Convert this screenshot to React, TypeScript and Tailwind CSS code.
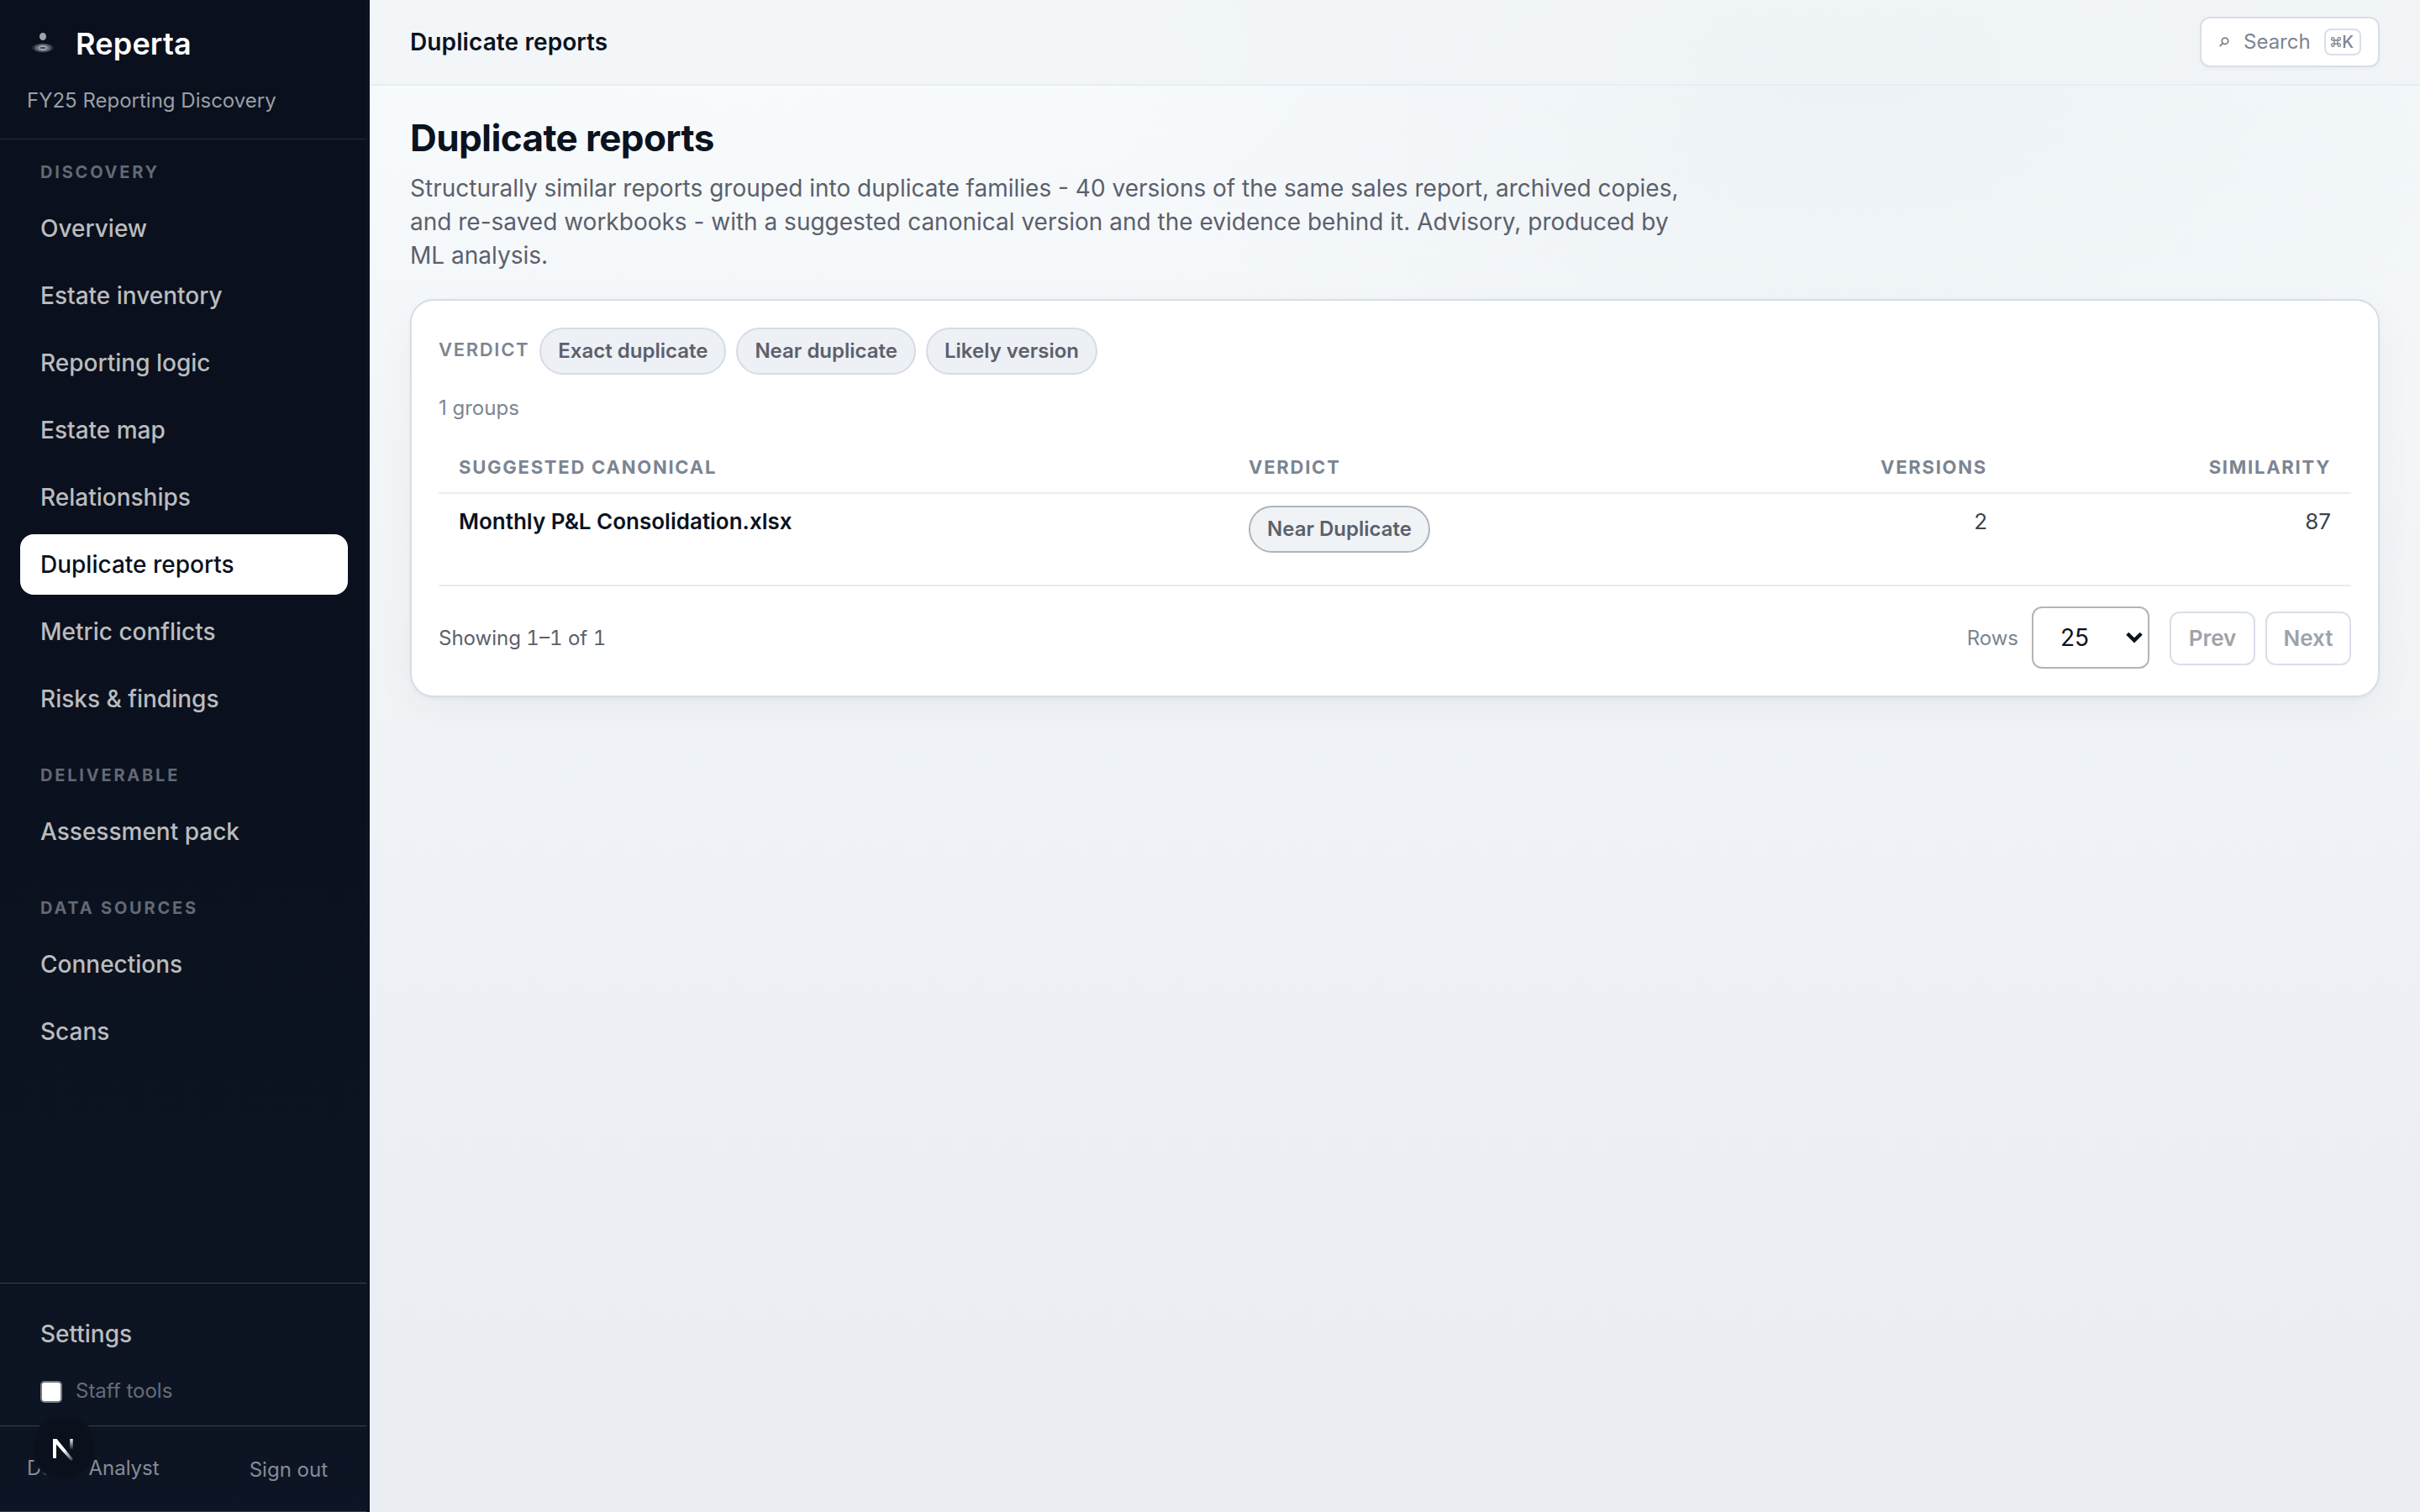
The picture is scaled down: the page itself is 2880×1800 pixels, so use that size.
import type { ReactNode } from "react";

const discovery = [
  "Overview",
  "Estate inventory",
  "Reporting logic",
  "Estate map",
  "Relationships",
  "Duplicate reports",
  "Metric conflicts",
  "Risks & findings",
];

function NavLabel({ children, first }: { children: ReactNode; first?: boolean }) {
  return (
    <div
      className={`px-6 text-[20px] font-bold uppercase leading-6 tracking-[2.8px] text-[#636975] ${
        first ? "pt-[27px]" : "pt-[43px]"
      } pb-[19px]`}
    >
      {children}
    </div>
  );
}

function NavItem({ label, active }: { label: string; active?: boolean }) {
  return (
    <a
      className={`flex h-[72px] shrink-0 items-center rounded-2xl px-6 text-[28px] font-medium ${
        active ? "bg-white text-[#0a101d]" : "text-[#bbbcbe]"
      }`}
    >
      {label}
    </a>
  );
}

function Logo() {
  return (
    <svg className="h-9 w-9" viewBox="0 0 36 36" fill="none">
      <ellipse cx="19" cy="23" rx="12.5" ry="5.5" fill="#2b323f" />
      <ellipse cx="19" cy="23" rx="9.5" ry="4.6" fill="#636a77" />
      <ellipse cx="19" cy="23" rx="5.5" ry="3" fill="#a3a7ae" />
      <ellipse cx="19" cy="23" rx="3.5" ry="1" fill="#3a414e" />
      <ellipse cx="19" cy="9.5" rx="4" ry="4.5" fill="#a0a3aa" />
    </svg>
  );
}

function Sidebar() {
  return (
    <aside className="flex h-full w-[440px] shrink-0 flex-col border-r-4 border-[#0c1322] bg-linear-to-b from-[#0a101d] from-40% to-[#0d1524]">
      <div className="flex h-[166px] shrink-0 flex-col border-b border-[#252b37] px-8">
        <div className="flex h-[104px] items-center gap-[22px]">
          <Logo />
          <span className="text-[36px] font-semibold tracking-[0.2px] text-white">Reperta</span>
        </div>
        <div className="pt-px text-[24px] leading-[30px] text-[#9a9fa7]">FY25 Reporting Discovery</div>
      </div>
      <nav className="flex grow flex-col px-6 pr-[22px]">
        <NavLabel first>Discovery</NavLabel>
        <div className="flex flex-col gap-2">
          {discovery.map((l) => (
            <NavItem key={l} label={l} active={l === "Duplicate reports"} />
          ))}
        </div>
        <NavLabel>Deliverable</NavLabel>
        <NavItem label="Assessment pack" />
        <NavLabel>Data sources</NavLabel>
        <div className="flex flex-col gap-2">
          <NavItem label="Connections" />
          <NavItem label="Scans" />
        </div>
      </nav>
      <div className="flex h-[170px] shrink-0 flex-col border-t border-[#3a414c] px-6 pt-6">
        <NavItem label="Settings" />
        <label className="flex h-[66px] items-center gap-4 px-6 text-[24px] text-[#666c78]">
          <span className="h-[26px] w-[26px] rounded-[5px] border-2 border-[#767b84] bg-white" />
          <span className="pb-0.5">Staff tools</span>
        </label>
      </div>
      <div className="relative flex h-[103px] shrink-0 items-center justify-between border-y border-[#3a414c] pl-8 pr-[46px] pb-0.5 text-[24px] text-[#858c97]">
        <span>Demo Analyst</span>
        <span className="pt-1">Sign out</span>
        <div className="absolute left-10 top-[-11px] h-[72px] w-[72px] rounded-full bg-[#0a101c] shadow-[0_0_0_3px_#0c1321]">
          <svg className="h-full w-full" viewBox="-1 -1 72 72" fill="none">
            <defs>
              <linearGradient id="diag" gradientUnits="userSpaceOnUse" x1="36" y1="38" x2="46" y2="50">
                <stop stopColor="#fff" />
                <stop offset="1" stopColor="#fff" stopOpacity="0.2" />
              </linearGradient>
              <linearGradient id="stem" gradientUnits="userSpaceOnUse" x1="44" y1="24" x2="44" y2="37">
                <stop stopColor="#fff" />
                <stop offset="1" stopColor="#fff" stopOpacity="0.1" />
              </linearGradient>
            </defs>
            <path d="M22 25h4v23h-4z" fill="#fff" />
            <path d="M22 25h4.6L46 49l-2.6 2L22 27z" fill="url(#diag)" />
            <path d="M42.2 25h3.6v12.5h-3.6z" fill="url(#stem)" />
          </svg>
        </div>
      </div>
    </aside>
  );
}

function Pill({ children, strong }: { children: ReactNode; strong?: boolean }) {
  return (
    <span
      className={`inline-flex h-14 items-center rounded-full border-2 px-5 text-[24px] font-semibold text-[#5b606c] ${
        strong ? "border-[#b0b4ba] bg-[#eff3f6]" : "border-[#d5dce6] bg-[#edf0f5]"
      }`}
    >
      {children}
    </span>
  );
}

function PageButton({ children }: { children: ReactNode }) {
  return (
    <button className="h-16 w-[102px] rounded-xl border-2 border-[#d9dfe9] bg-white pb-0.5 text-[26px] font-semibold text-[#9ea2a9]">
      {children}
    </button>
  );
}

const th =
  "h-[58px] border-b-2 border-[#e9ecf2] px-6 pt-0 pb-1 align-middle text-[22px] font-bold uppercase tracking-[1.76px] text-[#7b8592]";
const td = "h-[110px] border-b-2 border-[#e9ecf2] px-6 pt-3.5 align-top text-[26px] leading-[38px]";

export default function App() {
  return (
    <div className="flex h-[1800px] w-[2880px] overflow-hidden font-['Inter',sans-serif] text-[#0b1220]">
      <Sidebar />
      <div className="flex grow flex-col bg-[radial-gradient(ellipse_1300px_500px_at_18%_3%,rgba(255,255,255,0.4),transparent),radial-gradient(ellipse_900px_420px_at_72%_4%,rgba(226,232,238,0.4),transparent),linear-gradient(180deg,#f5f9fb_0%,#f0f4f7_47%,#edf0f5_66%,#eaedf2_90%,#eaedf2_100%)]">
        <header className="flex h-[102px] shrink-0 items-center justify-between border-b-2 border-[#e8edf1] bg-[#eff3f7]/70 px-12">
          <span className="text-[28px] font-semibold tracking-[0.1px]">Duplicate reports</span>
          <div className="flex h-[60px] w-[214px] items-center rounded-xl border-2 border-[#d9dfe9] bg-white pl-[21px] text-[24px] text-[#7b8592] shadow-[0_2px_4px_rgba(15,23,42,0.03)]">
            <svg className="h-3 w-3" viewBox="0 0 12 12" fill="none" stroke="#7b8592" strokeWidth="1.8">
              <circle cx="7" cy="4.8" r="3.7" />
              <path d="M4.4 7.4L0.8 11" />
            </svg>
            <span className="ml-[17px]">Search</span>
            <span className="ml-4 flex h-8 w-11 items-center justify-center rounded-lg border-2 border-[#d9dfe9] text-[20px] font-medium">
              <svg className="mr-px h-3 w-3" viewBox="0 0 12 12" fill="none" stroke="#7b8592" strokeWidth="1.3">
                <path d="M4 4H2.3A1.7 1.7 0 1 1 4 2.3v7.4A1.7 1.7 0 1 1 2.3 8h7.4A1.7 1.7 0 1 1 8 9.7V2.3A1.7 1.7 0 1 1 9.7 4H4" />
              </svg>
              K
            </span>
          </div>
        </header>
        <main className="flex flex-col px-12 pt-[34px]">
          <h1 className="text-[44px] font-bold leading-[56px] tracking-[-0.6px]">Duplicate reports</h1>
          <p className="mt-3 w-[1520px] text-[28px] leading-10 text-[#5b606c]">
            Structurally similar reports grouped into duplicate families - 40 versions of the same sales report, archived
            copies, and re-saved workbooks - with a suggested canonical version and the evidence behind it. Advisory,
            produced by ML analysis.
          </p>
          <section className="mt-8 flex h-[474px] flex-col rounded-[28px] border-2 border-[#d6dde7] bg-white px-8 pt-8 shadow-[0_2px_4px_rgba(15,23,42,0.04),0_16px_48px_rgba(15,23,42,0.04)]">
            <div className="flex items-center gap-3">
              <span className="pb-1 text-[22px] font-semibold tracking-[1.7px] text-[#7b8592]">VERDICT</span>
              <Pill>Exact duplicate</Pill>
              <Pill>Near duplicate</Pill>
              <Pill>Likely version</Pill>
            </div>
            <div className="mt-[22px] text-[24px] leading-9 text-[#7b8592]">1 groups</div>
            <table className="mt-[26px] w-full table-fixed border-separate border-spacing-0">
              <colgroup>
                <col className="w-[940px]" />
                <col className="w-[620px]" />
                <col className="w-[307px]" />
                <col />
              </colgroup>
              <thead>
                <tr>
                  <th className={`${th} text-left`}>Suggested canonical</th>
                  <th className={`${th} text-left`}>Verdict</th>
                  <th className={`${th} text-right`}>Versions</th>
                  <th className={`${th} text-right`}>Similarity</th>
                </tr>
              </thead>
              <tbody>
                <tr>
                  <td className={`${td} font-semibold`}>Monthly P&amp;L Consolidation.xlsx</td>
                  <td className={td}>
                    <div className="flex">
                      <Pill strong>Near Duplicate</Pill>
                    </div>
                  </td>
                  <td className={`${td} text-right text-[#3c4350]`}>2</td>
                  <td className={`${td} text-right text-[#3c4350]`}>87</td>
                </tr>
              </tbody>
            </table>
            <div className="mt-6 flex h-[74px] items-center">
              <span className="pt-0.5 text-[24px] text-[#5b606c] tabular-nums">Showing 1–1 of 1</span>
              <span className="ml-auto pt-0.5 text-[24px] text-[#7b8592]">Rows</span>
              <div className="ml-4 flex h-[74px] w-[140px] items-center justify-between rounded-xl border-2 border-[#b3b5b9] bg-white pl-8 pr-[5px] text-[28px]">
                25
                <svg className="h-4 w-[22px]" viewBox="0 0 22 16" fill="none" stroke="#0b1220" strokeWidth="4.4">
                  <path d="M2.8 3.2L11 11.4L19.2 3.2" />
                </svg>
              </div>
              <div className="ml-6 flex gap-3 pt-0.5">
                <PageButton>Prev</PageButton>
                <PageButton>Next</PageButton>
              </div>
            </div>
          </section>
        </main>
      </div>
    </div>
  );
}
